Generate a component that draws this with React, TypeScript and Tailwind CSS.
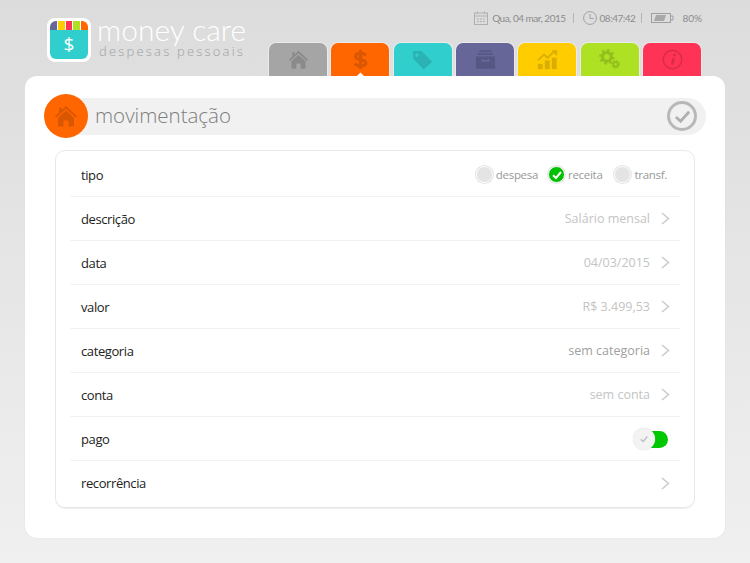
const HomeIcon = ({ className }: { className: string }) => (
  <svg viewBox="0 0 24 24" className={className} fill="currentColor">
    <path d="M12 2 L23 12.2 L21.6 13.6 L12 4.8 L2.4 13.6 L1 12.2 L5 8.5 V3.5 H7.5 V6.2 Z" />
    <path d="M12 6.6 L20 14 V22.5 H14.5 V16.5 H9.5 V22.5 H4 V14 Z" />
  </svg>
)

const DollarIcon = ({ className }: { className: string }) => (
  <svg viewBox="0 0 24 24" className={className} fill="none" stroke="currentColor" strokeWidth="3.6">
    <path d="M18 7.5 C17 5.5 15 4.8 12 4.8 C8.5 4.8 6.3 6.3 6.3 8.6 C6.3 14 18 10.5 18 15.8 C18 18 15.5 19.4 12 19.4 C9 19.4 6.8 18.4 5.8 16.4" />
    <path d="M12 1 V23" />
  </svg>
)

const TagIcon = ({ className }: { className: string }) => (
  <svg viewBox="0 0 24 24" className={className} fill="currentColor" fillRule="evenodd">
    <path d="M1 2.5 L10.5 2 L23 14.5 L13.5 23.5 L1.5 11 Z M5.5 5 A2 2 0 1 0 5.6 9 A2 2 0 1 0 5.5 5 Z" />
  </svg>
)

const InboxIcon = ({ className }: { className: string }) => (
  <svg viewBox="0 0 24 24" className={className} fill="currentColor">
    <rect x="5" y="1.5" width="14" height="2" />
    <rect x="3.5" y="4.8" width="17" height="2" />
    <path d="M1 8.5 H23 V22.5 H1 Z M7.5 11 V14.5 H16.5 V11 H14.5 V12.5 H9.5 V11 Z" fillRule="evenodd" />
  </svg>
)

const ChartIcon = ({ className }: { className: string }) => (
  <svg viewBox="0 0 24 24" className={className} fill="currentColor">
    <rect x="1" y="17" width="5.5" height="6" />
    <rect x="9" y="13" width="5.5" height="10" />
    <rect x="17" y="10" width="5.5" height="13" />
    <path d="M1 13 L8 6.5 L12 10 L19.5 3" fill="none" stroke="currentColor" strokeWidth="2" />
    <path d="M16.5 1.5 H23 V8 Z" />
  </svg>
)

const GearsIcon = ({ className }: { className: string }) => (
  <svg viewBox="0 0 24 24" className={className} fill="none" stroke="currentColor">
    <circle cx="9" cy="9" r="5" strokeWidth="3.6" />
    <circle cx="9" cy="9" r="7.6" strokeWidth="2.6" strokeDasharray="2.8 3.17" />
    <circle cx="19" cy="17.5" r="2.6" strokeWidth="2.2" />
    <circle cx="19" cy="17.5" r="4.2" strokeWidth="1.6" strokeDasharray="1.7 1.6" />
  </svg>
)

const InfoIcon = ({ className }: { className: string }) => (
  <svg viewBox="0 0 24 24" className={className} fill="none" stroke="currentColor">
    <circle cx="12" cy="12" r="10.6" strokeWidth="1.6" />
    <path d="M13.4 10.5 L11.6 17.8" strokeWidth="2.8" />
    <circle cx="14.2" cy="6.9" r="1.6" fill="currentColor" stroke="none" />
  </svg>
)

const Chevron = () => (
  <svg viewBox="0 0 9 13" className="h-[13px] w-[9px]" fill="none" stroke="#c8c8c8" strokeWidth="1.4">
    <path d="M1 1 L7.5 6.5 L1 12" />
  </svg>
)

const tabs = [
  { icon: HomeIcon, bg: 'bg-[#a5a5a5]', fg: 'text-[#8a8a8a]' },
  { icon: DollarIcon, bg: 'bg-[#ff6600]', fg: 'text-[#d95700]' },
  { icon: TagIcon, bg: 'bg-[#30cfcd]', fg: 'text-[#2bb2b3]' },
  { icon: InboxIcon, bg: 'bg-[#666699]', fg: 'text-[#575783]' },
  { icon: ChartIcon, bg: 'bg-[#ffcc00]', fg: 'text-[#d9ae00]' },
  { icon: GearsIcon, bg: 'bg-[#aee023]', fg: 'text-[#94be1e]' },
  { icon: InfoIcon, bg: 'bg-[#ff3355]', fg: 'text-[#d92b48]' },
]

const rows = [
  { label: 'descrição', value: 'Salário mensal', color: 'text-[#c4c4c4]' },
  { label: 'data', value: '04/03/2015', color: 'text-[#c4c4c4]' },
  { label: 'valor', value: 'R$ 3.499,53', color: 'text-[#c4c4c4]' },
  { label: 'categoria', value: 'sem categoria', color: 'text-[#a0a0a0]' },
  { label: 'conta', value: 'sem conta', color: 'text-[#c4c4c4]' },
]

function Radio({ label, checked, className }: { label: string; checked?: boolean; className: string }) {
  return (
    <div className={`flex items-center gap-[3px] ${className}`}>
      {checked ? (
        <span className="flex h-[17px] w-[17px] items-center justify-center rounded-full border border-white bg-[#00c000] shadow-[0_0_0_1px_#e4e4e4]">
          <svg viewBox="0 0 12 12" className="h-3 w-3" fill="none" stroke="#fff" strokeWidth="2">
            <path d="M2 6.2 L5 9 L10 3" />
          </svg>
        </span>
      ) : (
        <span className="h-[17px] w-[17px] rounded-full border border-white bg-[#e4e4e4] shadow-[0_0_0_1px_#e4e4e4]" />
      )}
      <span className="pt-[1px] text-[11.5px] tracking-[-0.3px] text-[#999]">{label}</span>
    </div>
  )
}

function Row({ label, children, last }: { label: string; children?: React.ReactNode; last?: boolean }) {
  return (
    <div className={`mx-[14px] flex h-[44px] items-center justify-between pl-[11px] pr-[10px] ${last ? '' : 'border-b border-[#f2f2f2]'}`}>
      <span className="pt-[2px] text-[13px] tracking-[-0.4px] text-[#222]">{label}</span>
      {children}
    </div>
  )
}

export default function App() {
  return (
    <div className="flex h-[563px] w-[750px] flex-col overflow-hidden bg-gradient-to-b from-[#dcdcdc] to-[#f0f0f0] font-['Open_Sans',sans-serif]">
      <header className="flex h-[76px] shrink-0 justify-between pl-[47px] pr-[48px]">
        <div className="flex pt-[18px]">
          <div className="flex h-[44px] w-[44px] items-stretch rounded-[8px] bg-white p-[3px]">
            <div className="flex w-full flex-col overflow-hidden rounded-[6px]">
              <div className="flex h-[9px] gap-px bg-white">
                <span className="flex-1 bg-[#666699]" />
                <span className="flex-1 bg-[#ffcc00]" />
                <span className="flex-1 bg-[#ff3355]" />
                <span className="flex-1 bg-[#aee023]" />
                <span className="flex-1 bg-[#ff6600]" />
              </div>
              <div className="flex flex-1 items-center justify-center bg-[#30cfcd] text-[19px] leading-none text-white">$</div>
            </div>
          </div>
          <div className="-mt-[4px] ml-[6px] flex flex-col">
            <span className="font-['Lato',sans-serif] text-[30px] font-light leading-[30px] text-white">money care</span>
            <span className="ml-[2px] text-[13px] font-light leading-[14px] tracking-[2.2px] text-[#a0a0a0]">despesas pessoais</span>
          </div>
        </div>
        <div className="flex flex-col items-end">
          <div className="flex h-[36px] items-center font-['Lato',sans-serif] text-[10px] text-[#8c8c8c]">
            <svg viewBox="0 0 14 14" className="mr-[4px] h-[14px] w-[14px]" fill="none" stroke="#b0b0b0">
              <rect x="0.5" y="2" width="13" height="11.5" />
              <path d="M0.5 5 H13.5 M3.5 0.5 V3 M10.5 0.5 V3 M3 8 H5 M6 8 H8 M9 8 H11 M3 10.5 H5 M6 10.5 H8 M9 10.5 H11" />
            </svg>
            <span className="tracking-[-0.5px]">Qua, 04 mar, 2015</span>
            <span className="ml-[7px] mr-[9px] h-[10px] w-px bg-[#b5b5b5]" />
            <svg viewBox="0 0 14 14" className="mr-[3px] h-[14px] w-[14px]" fill="none" stroke="#a0a0a0">
              <circle cx="7" cy="7" r="6.4" />
              <path d="M7 3 V7.5 H10.5" />
            </svg>
            <span className="tracking-[-0.5px]">08:47:42</span>
            <span className="ml-[6px] mr-[9px] h-[10px] w-px bg-[#b5b5b5]" />
            <svg viewBox="0 0 23 12" className="mr-[8px] h-[12px] w-[23px]" fill="none" stroke="#a0a0a0">
              <rect x="0.5" y="1.5" width="19" height="9" />
              <path d="M20 4 H22 V8 H20" />
              <path d="M3 9 L5 3 H15 L13 9 Z" fill="#a8a8a8" stroke="none" />
            </svg>
            <span>80%</span>
          </div>
          <nav className="mt-[6px] flex gap-[2.33px]">
            {tabs.map(({ icon: Icon, bg, fg }, i) => (
              <div key={i} className={`relative flex h-[34px] w-[60px] items-center justify-center rounded-t-[8px] border-x border-t border-[#eaeaea] ${bg} ${fg}`}>
                <Icon className="h-[21px] w-[21px]" />
                {i === 1 && <span className="absolute bottom-0 h-[5px] w-[5px] translate-y-1/2 rotate-45 bg-white" />}
              </div>
            ))}
          </nav>
        </div>
      </header>

      <main className="mx-[25px] flex h-[462px] flex-col rounded-[12px] bg-white px-[19px] pt-[18px] shadow-[0_0_2px_#e0e0e0]">
        <div className="flex h-[44px] items-center">
          <div className="relative z-10 flex h-[44px] w-[44px] shrink-0 items-center justify-center rounded-full bg-[#ff6600] text-[#d95700]">
            <HomeIcon className="h-[24px] w-[24px]" />
          </div>
          <div className="-ml-[22px] flex h-[37px] flex-1 items-center justify-between rounded-r-full bg-[#f1f1f1] pl-[29px] pr-[9px]">
            <span className="pb-[2px] text-[20.5px] font-light text-[#7d7d7d]">movimentação</span>
            <span className="flex h-[30px] w-[30px] items-center justify-center rounded-full border-[3px] border-[#b8b8b8]">
              <svg viewBox="0 0 18 18" className="h-[17px] w-[17px]" fill="none" stroke="#b0b0b0" strokeWidth="3">
                <path d="M2 9.5 L7 14 L16 4" />
              </svg>
            </span>
          </div>
        </div>

        <section className="mx-[11px] mt-[12px] h-[358px] rounded-[10px] border border-[#e8e8e8] pt-[2px] shadow-[0_1px_1px_#eeeeee]">
          <Row label="tipo">
            <div className="mr-[3px] flex items-center">
              <Radio label="despesa" className="mr-[10px]" />
              <Radio label="receita" checked className="mr-[12px]" />
              <Radio label="transf." className="" />
            </div>
          </Row>
          {rows.map((row) => (
            <Row key={row.label} label={row.label}>
              <div className="flex items-center gap-[11px]">
                <span className={`pt-[2px] text-[12.5px] ${row.color}`}>{row.value}</span>
                <Chevron />
              </div>
            </Row>
          ))}
          <Row label="pago">
            <div className="relative mr-[2px] mt-[1px] flex h-[17px] w-[35px] justify-end">
              <span className="h-[17px] w-[26px] rounded-r-full bg-[#00c800]" />
              <span className="absolute left-0 top-1/2 flex h-[22px] w-[22px] -translate-y-1/2 items-center justify-center rounded-full bg-[#f3f3f3] shadow-[0_0_1px_#cccccc]">
                <svg viewBox="0 0 12 12" className="h-[10px] w-[10px]" fill="none" stroke="#c0c0c0" strokeWidth="1.8">
                  <path d="M2 6.5 L5 9 L10 3" />
                </svg>
              </span>
            </div>
          </Row>
          <Row label="recorrência" last>
            <Chevron />
          </Row>
        </section>
      </main>
    </div>
  )
}
